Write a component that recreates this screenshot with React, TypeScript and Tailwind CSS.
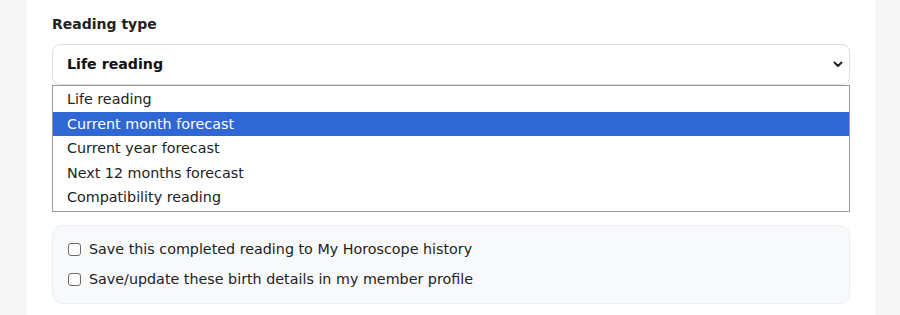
import React from "react";

const options = [
  "Life reading",
  "Current month forecast",
  "Current year forecast",
  "Next 12 months forecast",
  "Compatibility reading",
];

function Chevron() {
  return (
    <svg width="10" height="7" viewBox="0 0 10 7" fill="none">
      <path d="M1.5 1.5 L5 5 L8.5 1.5" stroke="#222" strokeWidth="2" strokeLinecap="round" strokeLinejoin="round" />
    </svg>
  );
}

function Checkbox() {
  return (
    <span className="inline-block w-[13px] h-[13px] rounded-[3px] border border-[#6b6b6b] bg-white shrink-0" />
  );
}

export default function App() {
  return (
    <div
      className="w-[900px] h-[315px] bg-[#f7f7f7] flex overflow-hidden"
      style={{ fontFamily: '"DejaVu Sans", Verdana, sans-serif' }}
    >
      <div className="ml-[25px] w-[852px] h-full bg-white border-x border-[#efefef] px-[26px] pt-[16px] text-[#222]">
        <div className="text-[14px] font-bold leading-[17px] text-[#222]">Reading type</div>
        <div className="mt-[11px] h-[41px] rounded-[8px] border border-[#dedede] bg-white flex items-center justify-between pl-[14px] pr-[6px]">
          <span className="text-[14.2px] font-bold text-[#111]">Life reading</span>
          <Chevron />
        </div>
        <div className="border border-[#9a9a9a] bg-white py-[1px]">
          {options.map((o, i) => (
            <div
              key={o}
              className={
                "h-[24.6px] flex items-center pl-[14px] pt-[1px] text-[14.3px] " +
                (i === 1 ? "bg-[#2f67d4] text-white" : "text-[#222]")
              }
            >
              {o}
            </div>
          ))}
        </div>
        <div className="mt-[13px] h-[79px] rounded-[10px] border border-[#eceef1] bg-[#f8f9fb] flex flex-col justify-center gap-[9px] pl-[15px]">
          <label className="flex items-center gap-[8px] text-[14.3px] leading-[21px] text-[#222]">
            <Checkbox />
            Save this completed reading to My Horoscope history
          </label>
          <label className="flex items-center gap-[8px] text-[14.3px] leading-[21px] text-[#222]">
            <Checkbox />
            Save/update these birth details in my member profile
          </label>
        </div>
      </div>
    </div>
  );
}
